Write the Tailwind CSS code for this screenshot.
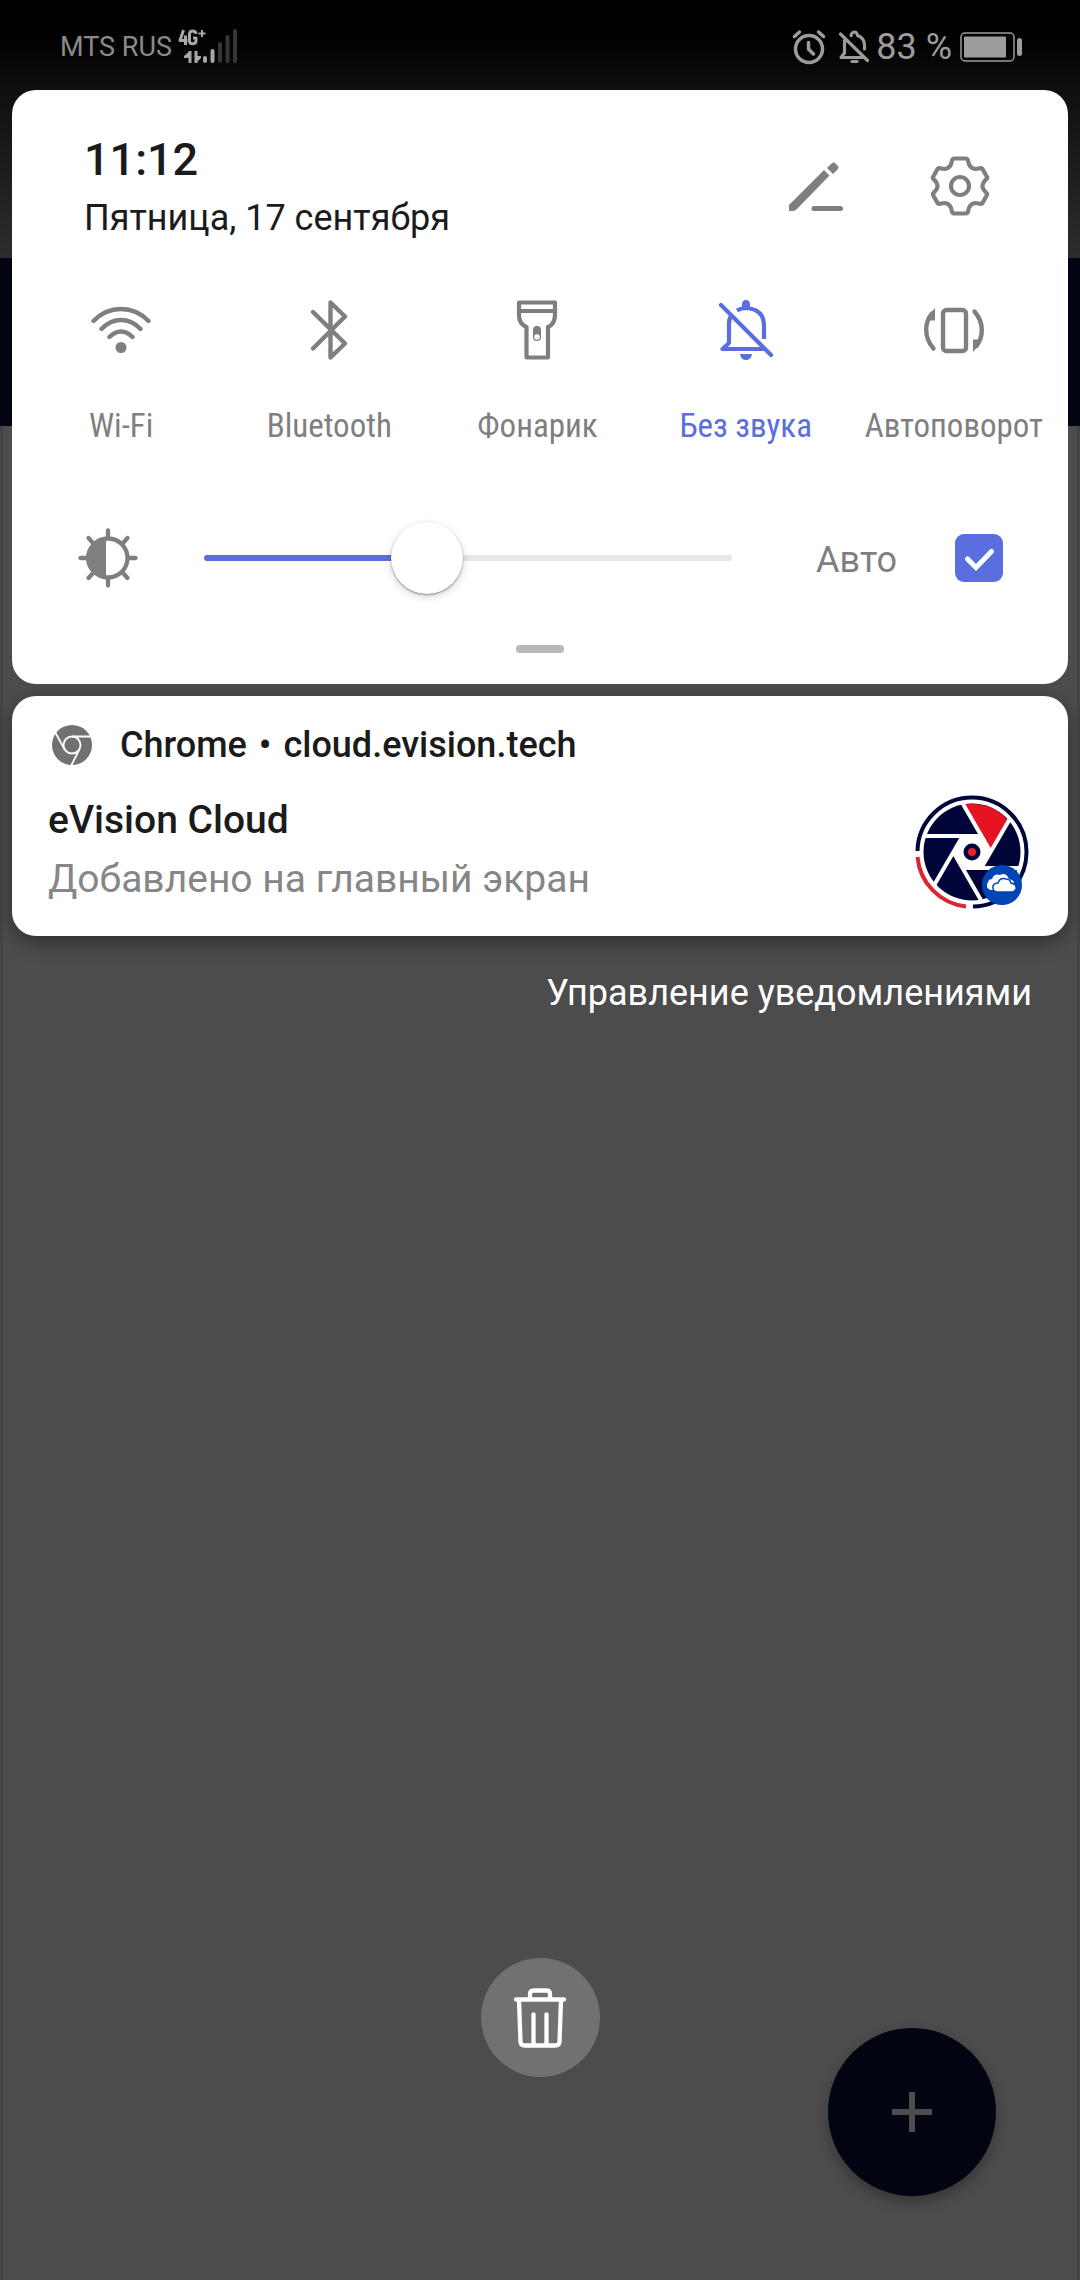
<!DOCTYPE html>
<html lang="ru">
<head>
<meta charset="utf-8">
<meta name="viewport" content="width=device-width, initial-scale=1">
<title>Шторка уведомлений</title>
<script src="https://cdn.jsdelivr.net/npm/@tailwindcss/browser@4"></script>
</head>
<body class="bg-[#4c4c4c] font-[Roboto,sans-serif]">
<div class="relative isolate flex min-h-screen flex-col overflow-hidden">

  <!-- dimmed app behind the shade -->
  <div class="absolute inset-0 -z-10 flex flex-col" aria-hidden="true">
    <div class="h-[258px] bg-linear-to-b from-black via-[#0d0d0d] via-30% to-[#2d2d2d]"></div>
    <div class="h-[168px] bg-[#020412]"></div>
    <div class="flex-1 border-x-3 border-[#444444]"></div>
  </div>

  <header class="flex h-[90px] items-center justify-between pt-[3px] pl-[60px] pr-[58px]">
    <div class="flex items-center gap-[6px]">
      <span class="text-[27px] leading-9 text-[#8a8a8a]">MTS RUS</span>
      <svg class="h-[36px] w-[60px]" viewBox="0 0 60 36" fill="none">
        <g stroke="#a8a8a8" stroke-width="3" stroke-linejoin="round">
          <path d="M5.500 1 L2 11.500 H9.500 M7.500 6.500 V16"/>
          <path d="M18 5 Q18 2 14.500 2 Q11.500 2 11.500 5 V12 Q11.500 14.800 14.500 14.800 Q18 14.800 18 12 V9 H15"/>
          <path d="M20.500 4.500 H27.500 M24 1 V8" stroke-width="2"/>
        </g>
        <path d="M12 22 V34 M18 22 V34" stroke="#a8a8a8" stroke-width="3"/>
        <path d="M12 22 L6 27 V29 H12 Z M18 34 L23 29 V27 H18 Z" fill="#a8a8a8"/>
        <g stroke-width="4" stroke-linecap="round">
          <path d="M27 29 V32 M34.500 22 V32" stroke="#a8a8a8"/>
          <path d="M42 15 V32 M49.500 8 V32 M57 2 V32" stroke="#363636"/>
        </g>
      </svg>
    </div>
    <div class="flex items-center text-[#9c9c9c]">
      <svg class="mr-3 h-[36px] w-[34px]" viewBox="0 0 34 36" fill="none" stroke="currentColor" stroke-width="3.500" stroke-linecap="round">
        <circle cx="17" cy="20" r="13.500"/><path d="M16.500 13.500 V20 L21.500 25 M2.500 7.500 L7.500 3 M31.500 7.500 L26.500 3"/>
      </svg>
      <svg class="mr-[6px] h-[36px] w-[32px]" viewBox="0 0 32 36" fill="none" stroke="currentColor" stroke-width="3.200" stroke-linecap="round" stroke-linejoin="round">
        <path d="M2.500 5 L29.500 31.500 M6.500 11.500 V24 L3 28.500 H25 M13 6.500 Q14 3 16.500 3 Q19 3 19.500 6.500 Q26.500 9 26.500 16 V20"/><path d="M14 32.500 H19" />
      </svg>
      <span class="text-[36px] leading-10">83 %</span>
      <svg class="ml-[8px] h-[30px] w-[62px]" viewBox="0 0 62 30" fill="none">
        <rect x="1" y="1" width="53" height="28" rx="4" stroke="currentColor" stroke-width="1.500"/>
        <rect x="4" y="4.500" width="42" height="21" rx="1" fill="currentColor"/>
        <rect x="57" y="6" width="5" height="18" rx="2.500" fill="currentColor"/>
      </svg>
    </div>
  </header>

  <main class="flex flex-1 flex-col px-3">
    <section class="flex flex-col rounded-3xl bg-white pt-[41px] text-[#7f7f7f]">
      <div class="flex items-start justify-between pl-[72px] pr-[78px]">
        <div class="flex flex-col text-[#1b1b1b]">
          <time class="text-[45px] font-medium leading-[57px]">11:12</time>
          <span class="text-[36px] leading-[60px]">Пятница, 17 сентября</span>
        </div>
        <div class="flex gap-[84px] pt-[25px]">
          <button type="button" aria-label="Изменить" class="h-[60px] w-[60px]">
            <svg viewBox="0 0 60 60" fill="currentColor">
              <path d="M3 47 L38 12 L43.500 17.500 L11 51 Q9 53 7 53 H3 Z M41 10 L45.500 5.500 Q47.500 3.500 49.500 5.500 L51.500 7.500 Q53.500 9.500 51.500 11.500 L47 16 Z" transform="translate(0 2)"/>
              <path d="M28 52.500 H54.500" stroke="currentColor" stroke-width="5" stroke-linecap="round"/>
            </svg>
          </button>
          <button type="button" aria-label="Настройки" class="h-[60px] w-[60px]">
            <svg viewBox="0 0 60 60" fill="none" stroke="currentColor" stroke-width="4.200" stroke-linejoin="round">
              <path d="M24 2.500 H36 Q37.500 2.500 38 4.500 Q39 12 45 13 Q47 13 51 12 Q52 12 52.500 13 L57 21 Q57.500 22 56.500 23 Q52.500 27 52.500 30 Q52.500 33 56.500 37 Q57.500 38 57 39 L52.500 47 Q52 48 51 48 Q47 47 45 47 Q39 48 38 55.500 Q37.500 57.500 36 57.500 H24 Q22.500 57.500 22 55.500 Q21 48 15 47 Q13 47 9 48 Q8 48 7.500 47 L3 39 Q2.500 38 3.500 37 Q7.500 33 7.500 30 Q7.500 27 3.500 23 Q2.500 22 3 21 L7.500 13 Q8 12 9 12 Q13 13 15 13 Q21 12 22 4.500 Q22.500 2.500 24 2.500 Z"/>
              <circle cx="30" cy="30" r="9"/>
            </svg>
          </button>
        </div>
      </div>

      <div class="mt-[52px] grid grid-cols-5 pl-[5px] pr-[10px] font-['Roboto_Condensed','Liberation_Sans_Narrow',Roboto,sans-serif] text-[33px] leading-10">
        <button type="button" class="flex flex-col items-center gap-[46px] whitespace-nowrap">
          <svg class="h-[60px] w-[60px]" viewBox="0 0 60 60" fill="none" stroke="currentColor" stroke-width="4.400" stroke-linecap="round">
            <path d="M2.500 21 Q14 9 30 9 Q46 9 57.500 21 M10.500 29 Q19 20 30 20 Q41 20 49.500 29 M18.500 37 Q24 31.500 30 31.500 Q36 31.500 41.500 37"/><circle cx="30" cy="47.500" r="5.500" fill="currentColor" stroke="none"/>
          </svg>
          <span>Wi-Fi</span>
        </button>
        <button type="button" class="flex flex-col items-center gap-[46px] whitespace-nowrap">
          <svg class="h-[60px] w-[60px]" viewBox="0 0 60 60" fill="none" stroke="currentColor" stroke-width="4.400" stroke-linecap="round" stroke-linejoin="round">
            <path d="M14 12 L46 43.500 L31.500 57.500 V2.500 L46 16.500 L14 48.500"/>
          </svg>
          <span>Bluetooth</span>
        </button>
        <button type="button" class="flex flex-col items-center gap-[46px] whitespace-nowrap">
          <svg class="h-[60px] w-[60px]" viewBox="0 0 60 60" fill="none" stroke="currentColor" stroke-width="4.200" stroke-linejoin="round">
            <path d="M12 2.500 H48 V15 Q48 24 41 27 V57.500 H19.500 V27 Q12 24 12 15 Z M12 11 H48"/>
            <rect x="26" y="26" width="8" height="15" rx="4" fill="currentColor" stroke="none"/><circle cx="30" cy="37" r="2.800" fill="white" stroke="none"/>
          </svg>
          <span>Фонарик</span>
        </button>
        <button type="button" aria-pressed="true" class="flex flex-col items-center gap-[46px] whitespace-nowrap text-[#5a6ee0]">
          <svg class="h-[60px] w-[60px]" viewBox="0 0 60 60" fill="none" stroke="currentColor" stroke-width="4.200" stroke-linecap="round" stroke-linejoin="round">
            <path d="M5 5 L55 55 M14.500 17 Q13 19 13 24 V43 L6.500 49 H48"/><path d="M21 10.500 Q25 8 30 8 Q48 9 48 26 V39" stroke-linecap="butt"/>
            <path d="M26 8 V4.500 Q26 0 30 0 Q34 0 34 4.500 V8 Z M24 54 H36 Q35 60 30 60 Q25 60 24 54 Z" fill="currentColor" stroke="none"/>
          </svg>
          <span>Без звука</span>
        </button>
        <button type="button" class="flex flex-col items-center gap-[46px] whitespace-nowrap">
          <svg class="h-[60px] w-[60px]" viewBox="0 0 60 60" fill="none" stroke="currentColor" stroke-width="4.400" stroke-linecap="round">
            <rect x="19" y="10" width="23" height="41" rx="3.500"/>
            <path d="M9.500 48.500 Q2.200 40 2.200 30 Q2.200 20 8 13.500 M50.500 11.500 Q57.800 20 57.800 30 Q57.800 39 52.500 46"/>
            <path d="M11 8 V20.500 H4 Q6 13 11 8 Z M49 52 V39.500 H56 Q54 47 49 52 Z" fill="currentColor" stroke="none"/>
          </svg>
          <span>Автоповорот</span>
        </button>
      </div>

      <div class="mt-[75px] flex h-[74px] items-center pl-[66px] pr-[65px]">
        <svg class="h-[60px] w-[60px] shrink-0" viewBox="0 0 60 60" fill="none" stroke="currentColor" stroke-width="4.300" stroke-linecap="round">
          <circle cx="30" cy="30" r="19.500"/><path d="M28 10 V50 A20 20 0 0 1 28 10 Z" fill="currentColor" stroke="none"/>
          <path d="M30 2.500 V9 M30 51 V57.500 M2.500 30 H9 M51 30 H57.500 M10.500 10 L15.500 15.500 M49.500 10 L44.500 15.500 M10.500 50 L15.500 44.500 M49.500 50 L44.500 44.500"/>
        </svg>
        <input type="range" min="0" max="100" value="41" aria-label="Яркость" class="ml-[66px] h-[74px] min-w-0 flex-1 appearance-none bg-transparent [&::-webkit-slider-runnable-track]:h-[6px] [&::-webkit-slider-runnable-track]:rounded-full [&::-webkit-slider-runnable-track]:bg-linear-to-r [&::-webkit-slider-runnable-track]:from-[#5a6ee0] [&::-webkit-slider-runnable-track]:from-42% [&::-webkit-slider-runnable-track]:to-[#e7e7e7] [&::-webkit-slider-runnable-track]:to-42% [&::-webkit-slider-thumb]:-mt-[33px] [&::-webkit-slider-thumb]:h-[72px] [&::-webkit-slider-thumb]:w-[72px] [&::-webkit-slider-thumb]:appearance-none [&::-webkit-slider-thumb]:rounded-full [&::-webkit-slider-thumb]:bg-white [&::-webkit-slider-thumb]:shadow-[0_1px_2px_rgba(0,0,0,0.4),0_3px_8px_rgba(0,0,0,0.16)]">
        <label for="auto" class="ml-[84px] pt-[3px] text-[36px] leading-10">Авто</label>
        <span class="ml-[58px] grid h-12 w-12 shrink-0">
          <input id="auto" type="checkbox" checked class="col-start-1 row-start-1 h-12 w-12 appearance-none rounded-[9px] border-2 border-[#7f7f7f] checked:border-0 checked:bg-[#5a6ee0]">
          <svg class="pointer-events-none col-start-1 row-start-1 h-12 w-12" viewBox="0 0 48 48" fill="none" stroke="white" stroke-width="5" stroke-linecap="round"><path d="M12.500 25 L21 33.500 L36.500 17.500" stroke-linejoin="miter"/></svg>
        </span>
      </div>
      <div class="mt-[50px] mb-[31px] h-2 w-12 self-center rounded-full bg-[#b8b8b8]"></div>
    </section>

    <article class="mt-3 flex h-60 flex-col rounded-3xl bg-white px-9 pt-6 shadow-[0_6px_20px_rgba(0,0,0,0.4)]">
      <div class="flex items-center gap-[27px]">
        <svg class="ml-[3px] h-[42px] w-[42px]" viewBox="0 0 42 42" fill="none">
          <circle cx="21" cy="21" r="20" fill="#6f7173"/>
          <g stroke="white" stroke-width="1.800"><circle cx="21" cy="21" r="8.500"/><path d="M21 12.500 H41 M13.600 25.300 L4 8 M28.400 25.300 L20 42"/></g>
        </svg>
        <div class="flex gap-3 text-[36px] font-medium leading-[50px] text-[#1b1b1b]">
          <span>Chrome</span><span>•</span><span>cloud.evision.tech</span>
        </div>
      </div>
      <div class="flex justify-between">
        <div class="flex flex-col text-[39px]">
          <h2 class="mt-5 font-medium leading-[60px] text-[#1b1b1b]">eVision Cloud</h2>
          <p class="leading-[58px] text-[#868686]">Добавлено на главный экран</p>
        </div>
        <svg class="mt-[24px] mr-[3px] h-[116px] w-[116px]" viewBox="0 0 116 116" fill="none">
          <path d="M4.500 57 A54.500 54.500 0 1 1 60 112.500" stroke="#02053a" stroke-width="4"/>
          <path d="M4.500 63 A54.500 54.500 0 0 0 53 112.500" stroke="#dd2436" stroke-width="4"/>
          <circle cx="59" cy="58" r="48.500" fill="#02053a"/>
          <path d="M50 10.500 A48.500 48.500 0 0 1 94.500 25.500 L77.700 58 Z" fill="#e61423"/>
          <path d="M49.700 42 H68.300 L77.700 58 L68.300 74 H49.700 L40.300 58 Z" fill="white"/>
          <path d="M68.300 42 H10 M77.700 58 L49.700 9.500 M68.300 74 L96.500 25.500 M49.700 74 H108 M40.300 58 L68.500 107 M49.700 42 L21.500 90.500" stroke="white" stroke-width="4"/>
          <circle cx="59" cy="58" r="8.500" fill="#02053a"/><circle cx="59" cy="58" r="4" fill="#ee2030"/>
          <circle cx="89" cy="91" r="20" fill="#0045b4"/>
          <path d="M77 96 Q72 93 75 88 Q76 85 79 85 Q81 79 87 81 Q93 78 96 85 Q101 86 101 89 L87 96 Z" fill="white"/>
          <path d="M84 98 Q79 97 80 92 Q81 89 85 89 Q87 83 93 85 Q97 85 98 89 Q104 90 103 95 Q102 98 99 98 Z" fill="white" stroke="#0045b4" stroke-width="1.500"/>
        </svg>
      </div>
    </article>

    <button type="button" class="mt-[30px] mr-9 self-end text-[36px] leading-[54px] text-white">Управление уведомлениями</button>
    <button type="button" aria-label="Удалить все уведомления" class="mt-auto mb-[203px] grid h-[119px] w-[119px] place-items-center self-center rounded-full bg-[#717171]">
      <svg class="h-[60px] w-[54px]" viewBox="0 0 54 60" fill="none" stroke="white" stroke-width="4.300" stroke-linecap="round" stroke-linejoin="round">
        <path d="M3 11.500 H51 M6 12 L7.500 54 Q8 57.500 11.500 57.500 H42.500 Q46 57.500 46.500 54 L48 12 M17 11 V6 Q17 2.500 20.500 2.500 H33.500 Q37 2.500 37 6 V11 M20.500 26.500 V57 M33.500 26.500 V57"/>
      </svg>
    </button>
  </main>

  <!-- floating button of the app below -->
  <button type="button" aria-label="Добавить" class="absolute right-[84px] bottom-[84px] grid h-[168px] w-[168px] place-items-center rounded-full bg-[#020412] shadow-[0_6px_14px_rgba(0,0,0,0.3)]">
    <svg class="h-10 w-10" viewBox="0 0 40 40" stroke="#4c4c4c" stroke-width="6"><path d="M0 20 H40 M20 0 V40"/></svg>
  </button>
</div>
</body>
</html>
